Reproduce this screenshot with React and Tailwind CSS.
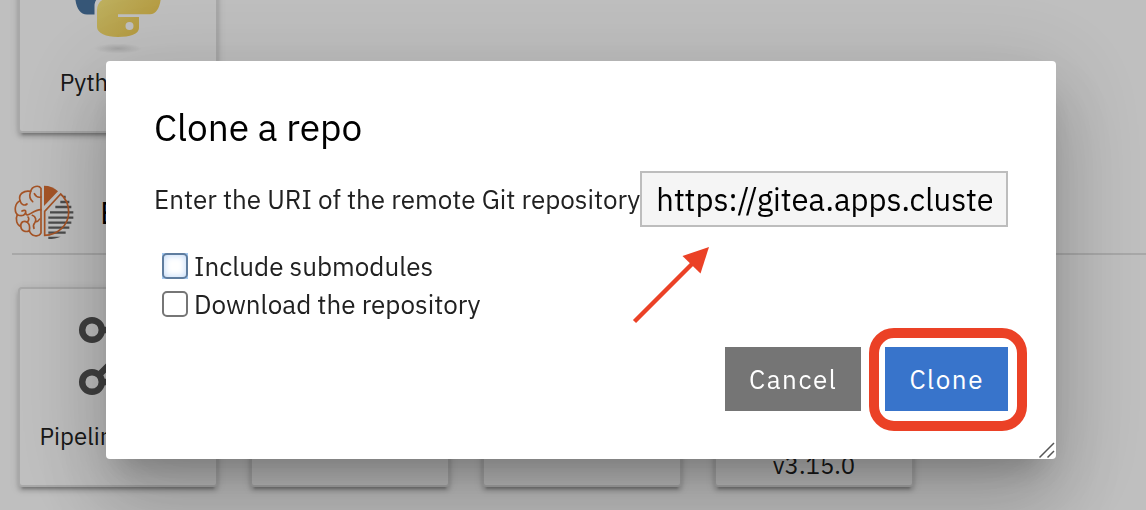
import React from "react";

function PythonIcon() {
  return (
    <svg width="104" height="104" viewBox="66 -50 104 104" className="shrink-0" aria-hidden="true">
      <defs>
        <linearGradient id="pyYellow" x1="0.2" y1="0.3" x2="1" y2="1">
          <stop offset="0" stopColor="#fce97c" />
          <stop offset="1" stopColor="#efc64a" />
        </linearGradient>
        <radialGradient id="pyShadow">
          <stop offset="0" stopColor="#000" stopOpacity="0.14" />
          <stop offset="1" stopColor="#000" stopOpacity="0" />
        </radialGradient>
      </defs>
      <path
        d="M118-48C101-48 97-42 97-36V-28H118V-25H88C80-25 75-18 75-7C75 6 79 14.500 87 14.500H94.500V6C94.500-1 100-5 107-5H129C135-5 139-10 139-16V-36C139-44 130-48 118-48Z"
        fill="#48739f"
      />
      <path
        d="M142-25V-14C142-6 136-1.500 129-1.500H108C101-1.500 97 4 97 10V27C97 33 106 37 118 37C130 37 139 34 139 28V17H118V14.200H150C157 14.200 161 6 161-6C161-18 157-25 149-25Z"
        fill="url(#pyYellow)"
      />
      <circle cx="106.500" cy="-37" r="4" fill="#fff" />
      <circle cx="129.500" cy="26" r="4" fill="#fff" />
      <ellipse cx="118" cy="48.500" rx="24" ry="5" fill="url(#pyShadow)" />
    </svg>
  );
}

function PipelineIcon() {
  return (
    <svg width="104" height="104" viewBox="66 304 104 104" className="shrink-0" fill="none" stroke="#555" strokeWidth="6.500" aria-hidden="true">
      <circle cx="92" cy="330" r="9.800" />
      <circle cx="92" cy="382" r="9.800" />
      <circle cx="144" cy="330" r="9.800" />
      <circle cx="144" cy="382" r="9.800" />
      <path d="M102 330H134M102 382H134M99 375L137 337" />
    </svg>
  );
}

function ElyraIcon() {
  return (
    <svg width="64" height="58" viewBox="36 99 192 174" className="shrink-0" fill="none" aria-hidden="true">
      <path
        d="M190 141H197M181 156H208M166 171H214M150 187H220M145 203H220M145 218H214M145 233H208M145 248H197"
        stroke="#666"
        strokeWidth="7"
      />
      <path d="M145 260H182C171 265 159 267 145 267Z" fill="#666" />
      <path d="M132 107C149 107 163 113 174 124L132 168Z" fill="#dc7033" />
      <path d="M182 132L134 184V256C172 256 206 226 206 187C206 165 197 145 182 132Z" stroke="#dc7033" strokeWidth="5" />
      <g stroke="#dc7033" strokeWidth="5" strokeLinecap="round" strokeLinejoin="round">
        <path d="M123 115C117 105 96 107 92 124C72 120 54 132 60 152C45 159 41 182 52 194C45 208 51 226 62 229C64 243 77 248 88 242C94 259 116 263 123 249Z" />
        <path d="M92 124C88 136 90 149 98 155" />
        <path d="M103 131C107 139 115 143 123 141" />
        <path d="M60 152C64 165 74 168 81 162" />
        <path d="M52 194C65 200 79 196 77 183C76 181 71 180 66 183" />
        <path d="M77 190C81 205 96 181 123 179" />
        <path d="M62 229C62 215 72 211 82 217C87 210 88 205 84 201" />
        <path d="M82 217C88 221 90 231 88 242" />
        <path d="M97 196C108 200 110 211 104 219C100 223 100 230 102 235M106 216C112 215 117 211 119 207" />
      </g>
    </svg>
  );
}

function LauncherCard({ icon, label }) {
  return (
    <button
      type="button"
      className="flex h-[200px] w-[200px] shrink-0 flex-col items-center gap-3.5 rounded border-2 border-[#e0e0e0] bg-white px-4 pt-[15px] text-2xl leading-[29px] text-[#212121] shadow-[0_6px_2px_-4px_rgba(0,0,0,0.2),0_4px_4px_0_rgba(0,0,0,0.14),0_2px_10px_0_rgba(0,0,0,0.12)]"
    >
      {icon || <span className="h-[104px] w-[104px] shrink-0" />}
      <span>{label}</span>
    </button>
  );
}

function Launcher() {
  return (
    <main className="-mt-[67px] bg-white pl-3">
      <div className="flex gap-8 pl-1.5">
        <LauncherCard icon={<PythonIcon />} label="Python 3.9" />
      </div>
      <section>
        <header className="mt-[50px] flex h-[72px] items-start gap-6 border-b-2 border-[#e0e0e0]">
          <ElyraIcon />
          <h2 className="text-[32px] leading-[58px] text-black">Elyra</h2>
        </header>
        <div className="mt-8 flex gap-8 pl-1.5">
          <LauncherCard icon={<PipelineIcon />} label="Pipeline Editor" />
          <LauncherCard label="Python Editor" />
          <LauncherCard label="Documentation" />
          <LauncherCard label="What’s new in v3.15.0" />
        </div>
      </section>
    </main>
  );
}

function CheckRow({ id, label, focused }) {
  return (
    <div className="flex h-[38px] items-center gap-1.5 pl-2">
      <span className={focused ? "flex bg-[#a3c8f0]" : "flex"}>
        <input
          id={id}
          type="checkbox"
          className={
            focused
              ? "h-[26px] w-[26px] appearance-none rounded-[5px] border-2 border-[#5f7d9f] bg-white shadow-[inset_0_0_6px_1px_#c6dcf8]"
              : "h-[26px] w-[26px] appearance-none rounded-[5px] border-2 border-[#767676] bg-white"
          }
        />
      </span>
      <label htmlFor={id}>{label}</label>
    </div>
  );
}

function CloneDialog() {
  return (
    <div className="fixed inset-0 flex items-start bg-black/25 pt-[61px] pr-[90px] pl-[106px]">
      <form
        role="dialog"
        aria-labelledby="clone-title"
        onSubmit={(e) => e.preventDefault()}
        className="relative w-full rounded bg-white p-12 text-[26px] text-[#212121] shadow-[0_22px_30px_-14px_rgba(0,0,0,0.2),0_48px_76px_6px_rgba(0,0,0,0.14),0_18px_92px_16px_rgba(0,0,0,0.12)]"
      >
        <h1 id="clone-title" className="text-[37px] leading-9 text-black">
          Clone a repo
        </h1>
        <div className="mt-[26px] flex items-center">
          <label htmlFor="repo-uri" className="shrink-0 whitespace-nowrap">
            Enter the URI of the remote Git repository
          </label>
          <input
            id="repo-uri"
            type="text"
            defaultValue="https://gitea.apps.cluster"
            className="h-14 min-w-0 flex-1 border-2 border-[#bdbdbd] bg-[#f5f5f5] px-3.5 text-[31px] text-black outline-none"
          />
        </div>
        <div className="mt-5">
          <CheckRow id="submodules" label="Include submodules" focused />
          <CheckRow id="download" label="Download the repository" />
        </div>
        <footer className="mt-6 flex justify-end gap-6 text-white">
          <button type="button" className="h-16 bg-[#757575] px-6 tracking-[0.06em]">
            Cancel
          </button>
          <div className="relative">
            <button type="submit" className="h-16 bg-[#3874cb] px-6 tracking-[0.06em]">
              Clone
            </button>
            <span className="pointer-events-none absolute -top-[19px] -right-[19px] -bottom-5 -left-4 rounded-[25px] border-10 border-[#eb4126]" />
          </div>
        </footer>
        <svg
          className="pointer-events-none absolute top-[185px] right-[346px]"
          width="78"
          height="78"
          viewBox="632 246 78 78"
          aria-hidden="true"
        >
          <path d="M634.500 321.500L692 264" stroke="#eb4126" strokeWidth="4.500" />
          <path d="M709 247L682.500 256L700.500 273.500Z" fill="#eb4126" />
        </svg>
        <svg className="absolute right-0 bottom-0" width="18" height="18" viewBox="0 0 18 18" stroke="#555" strokeWidth="1.500" aria-hidden="true">
          <path d="M1.500 16.500L16 2M9.500 16.500L16 10" />
        </svg>
      </form>
    </div>
  );
}

export default function App() {
  return (
    <div className="h-screen overflow-hidden bg-white font-['IBM_Plex_Sans',Roboto,sans-serif]">
      <Launcher />
      <CloneDialog />
    </div>
  );
}
